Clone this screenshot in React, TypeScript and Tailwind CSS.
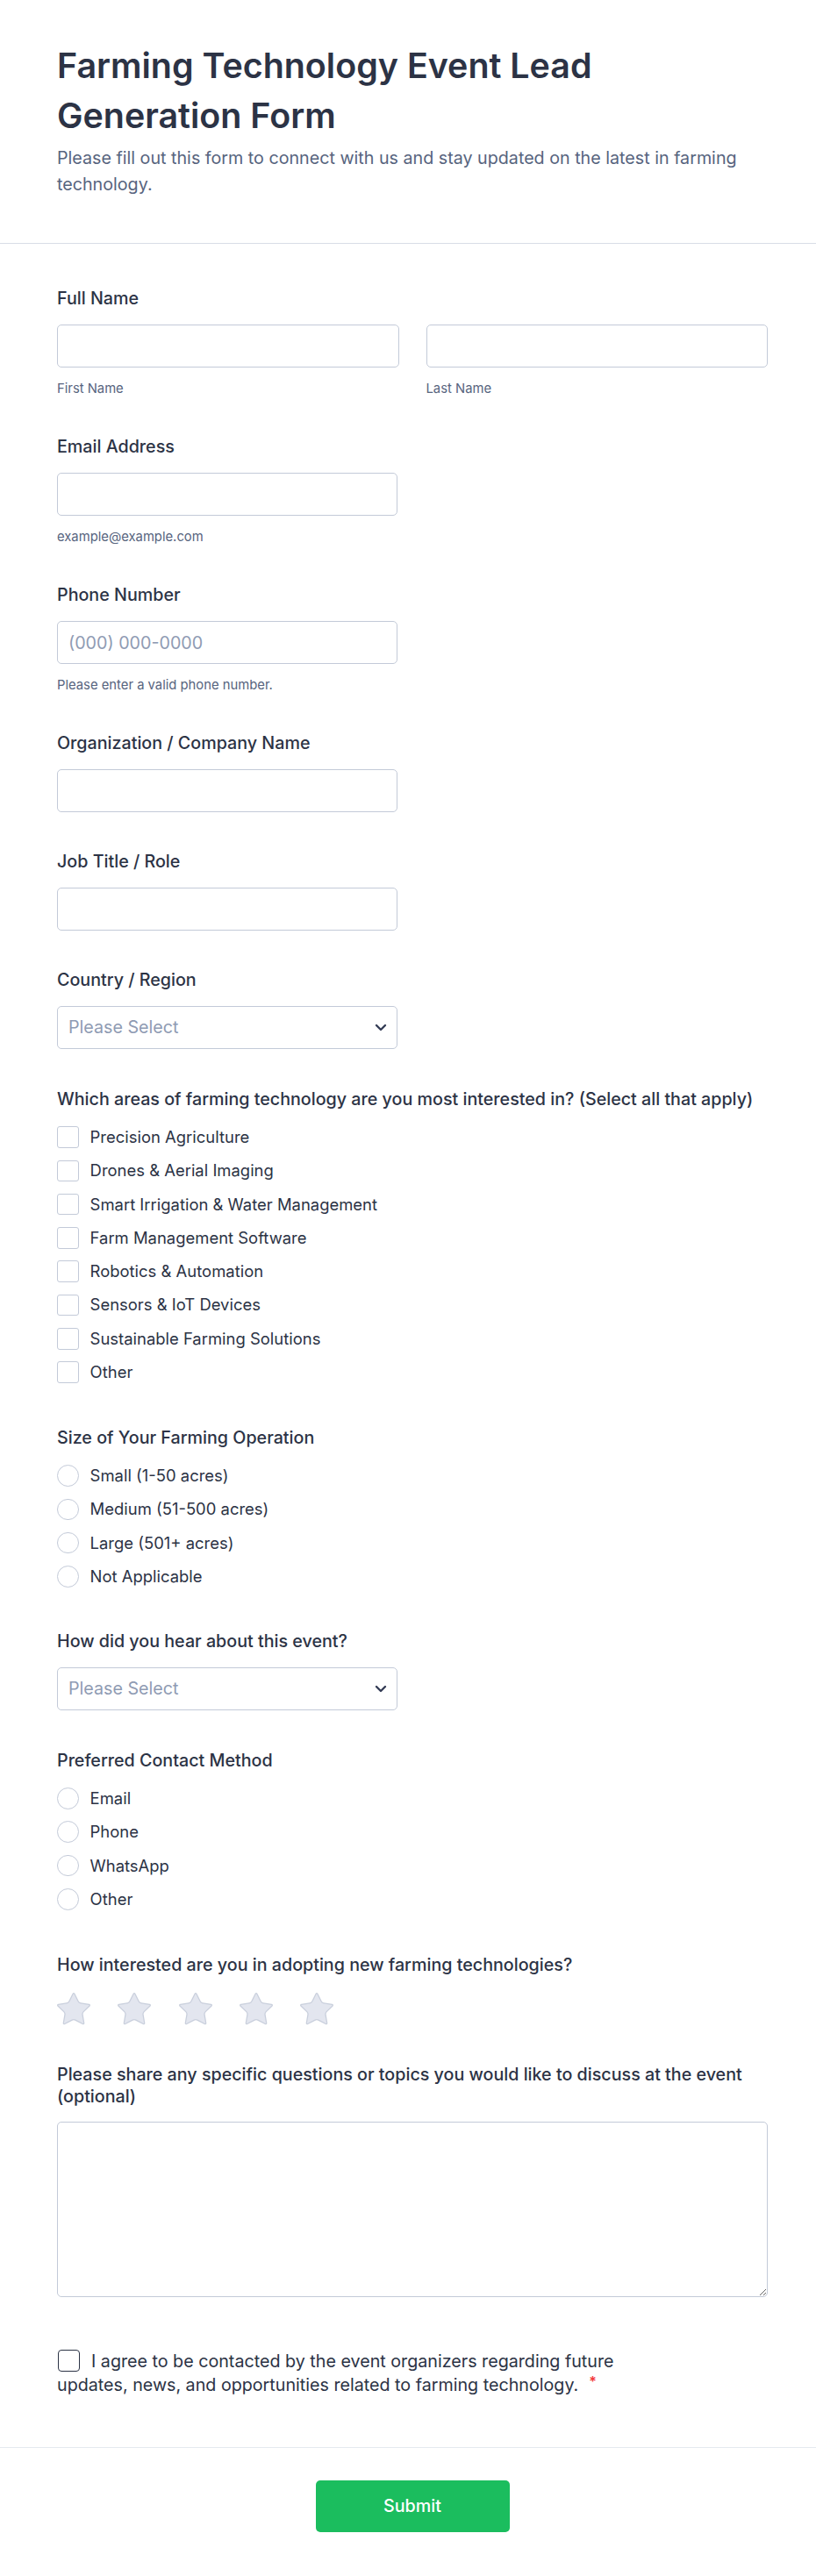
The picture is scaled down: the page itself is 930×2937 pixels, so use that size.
import React from "react";

function Label({ children }: { children: React.ReactNode }) {
  return <div className="text-[19.7px] leading-[25px] font-medium text-[#2c3345]">{children}</div>;
}

function TextInput({ placeholder, wide }: { placeholder?: string; wide?: boolean }) {
  return (
    <input
      type="text"
      placeholder={placeholder}
      className={`${wide ? "w-full" : "w-[388px]"} block h-[49px] rounded-[5px] border border-[#c3cad8] bg-white px-[12px] text-[19.7px] text-[#2c3345] outline-none placeholder:text-[#8f9bb3]`}
    />
  );
}

function Helper({ children }: { children: React.ReactNode }) {
  return <div className="mt-[14px] text-[14.8px] leading-[20px] text-[#57647e]">{children}</div>;
}

function SelectBox() {
  return (
    <div className="mt-[17px] flex h-[49px] w-[388px] items-center justify-between rounded-[5px] border border-[#c3cad8] bg-white pl-[12px] pr-[11px]">
      <span className="text-[19.7px] text-[#8f9bb3]">Please Select</span>
      <svg width="14" height="9" viewBox="0 0 14 9" fill="none" stroke="#343c55" strokeWidth="2.4" strokeLinecap="round" strokeLinejoin="round">
        <path d="M2 2l5 5 5-5" />
      </svg>
    </div>
  );
}

function OptionList({ items, round }: { items: string[]; round?: boolean }) {
  return (
    <div className="mt-[18px] flex flex-col gap-[13.3px]">
      {items.map((t) => (
        <div key={t} className="flex h-[25px] items-center gap-[13px]">
          <span
            className={`h-[24.6px] w-[24.6px] shrink-0 border border-[#c3cad8] bg-white ${round ? "rounded-full" : "rounded-[3px]"}`}
          />
          <span className="text-[18.45px] leading-[25px] text-[#2c3345]">{t}</span>
        </div>
      ))}
    </div>
  );
}

function Star() {
  return (
    <svg width="44" height="44" viewBox="0 0 24 24" fill="#e3e6ef" stroke="#c9cfdc" strokeWidth="0.7" strokeLinejoin="round">
      <path d="M11.525 2.295a.53.53 0 0 1 .95 0l2.31 4.679a2.123 2.123 0 0 0 1.595 1.16l5.166.756a.53.53 0 0 1 .294.904l-3.736 3.638a2.123 2.123 0 0 0-.611 1.878l.882 5.14a.53.53 0 0 1-.771.56l-4.618-2.428a2.122 2.122 0 0 0-1.973 0L6.396 21.01a.53.53 0 0 1-.77-.56l.881-5.139a2.122 2.122 0 0 0-.611-1.879L2.16 9.795a.53.53 0 0 1 .294-.906l5.165-.755a2.122 2.122 0 0 0 1.597-1.16z" />
    </svg>
  );
}

export default function App() {
  return (
    <div className="min-h-[2937px] w-full bg-white font-[Inter]">
      <header className="border-b border-[#d8dde6] pl-[65px] pr-[55px] pt-[47px] pb-[52px]">
        <h1 className="text-[39.4px] font-semibold leading-[57px] text-[#2c3345]">
          Farming Technology Event Lead Generation Form
        </h1>
        <p className="mt-[4px] text-[19.7px] leading-[30px] text-[#57647e]">
          Please fill out this form to connect with us and stay updated on the latest in farming technology.
        </p>
      </header>

      <main className="pl-[65px] pr-[55px] pt-[50px]">
        <section>
          <Label>Full Name</Label>
          <div className="mt-[17px] grid grid-cols-2 gap-[31px]">
            <div>
              <TextInput wide />
              <Helper>First Name</Helper>
            </div>
            <div>
              <TextInput wide />
              <Helper>Last Name</Helper>
            </div>
          </div>
        </section>

        <section className="mt-[44px]">
          <Label>Email Address</Label>
          <div className="mt-[17px]">
            <TextInput />
          </div>
          <Helper>example@example.com</Helper>
        </section>

        <section className="mt-[44px]">
          <Label>Phone Number</Label>
          <div className="mt-[17px]">
            <TextInput placeholder="(000) 000-0000" />
          </div>
          <Helper>Please enter a valid phone number.</Helper>
        </section>

        <section className="mt-[44px]">
          <Label>Organization / Company Name</Label>
          <div className="mt-[17px]">
            <TextInput />
          </div>
        </section>

        <section className="mt-[44px]">
          <Label>Job Title / Role</Label>
          <div className="mt-[17px]">
            <TextInput />
          </div>
        </section>

        <section className="mt-[44px]">
          <Label>Country / Region</Label>
          <SelectBox />
        </section>

        <section className="mt-[45px]">
          <Label>Which areas of farming technology are you most interested in? (Select all that apply)</Label>
          <OptionList
            items={[
              "Precision Agriculture",
              "Drones & Aerial Imaging",
              "Smart Irrigation & Water Management",
              "Farm Management Software",
              "Robotics & Automation",
              "Sensors & IoT Devices",
              "Sustainable Farming Solutions",
              "Other",
            ]}
          />
        </section>

        <section className="mt-[50px]">
          <Label>Size of Your Farming Operation</Label>
          <OptionList round items={["Small (1-50 acres)", "Medium (51-500 acres)", "Large (501+ acres)", "Not Applicable"]} />
        </section>

        <section className="mt-[49px]">
          <Label>How did you hear about this event?</Label>
          <SelectBox />
        </section>

        <section className="mt-[45px]">
          <Label>Preferred Contact Method</Label>
          <OptionList round items={["Email", "Phone", "WhatsApp", "Other"]} />
        </section>

        <section className="mt-[50px]">
          <Label>How interested are you in adopting new farming technologies?</Label>
          <div className="-ml-[3px] mt-[16px] flex gap-[25.3px]">
            <Star />
            <Star />
            <Star />
            <Star />
            <Star />
          </div>
        </section>

        <section className="mt-[40px]">
          <Label>Please share any specific questions or topics you would like to discuss at the event (optional)</Label>
          <textarea className="mt-[16px] block h-[200px] w-full rounded-[5px] border border-[#c3cad8] bg-white p-3 text-[19.7px] text-[#2c3345] outline-none" />
        </section>

        <section className="mt-[60px] pb-[57px]">
          <p className="max-w-[680px] text-[19.7px] leading-[27px] text-[#2c3345]">
            <span className="mr-[13px] ml-[1px] inline-block h-[25px] w-[25px] rounded-[4px] border-[1.5px] border-[#2c3345] bg-white align-top" />
            I agree to be contacted by the event organizers regarding future updates, news, and opportunities related to farming technology.
            <span className="ml-[12px] align-[5px] text-[16px] leading-[16px] font-semibold text-[#f23a3c]">*</span>
          </p>
        </section>
      </main>

      <footer className="border-t border-[#e5e9ef] pl-[65px] pr-[55px] pt-[37px] pb-[50px]">
        <div className="flex justify-center">
          <button className="h-[59px] w-[221px] rounded-[5px] bg-[#1bbd5e] text-[19.7px] font-medium text-white">
            Submit
          </button>
        </div>
      </footer>
    </div>
  );
}
